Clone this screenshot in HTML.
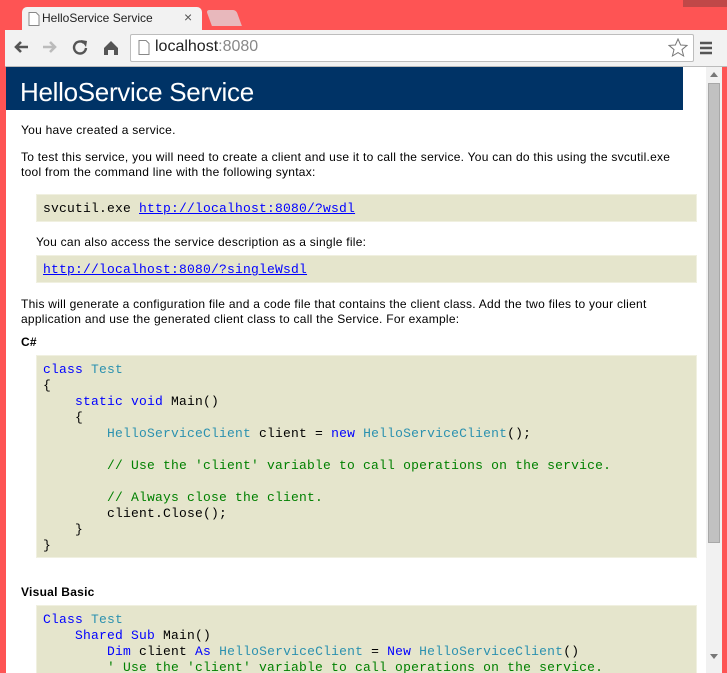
<!DOCTYPE html>
<html><head><meta charset="utf-8"><style>
*{margin:0;padding:0;box-sizing:border-box}
body{width:727px;height:673px;overflow:hidden;background:#fe5454;position:relative;font-family:"Liberation Sans",sans-serif}
.abs{position:absolute}
.tab{left:22px;top:7px;width:180px;height:27px;background:#f2f2f2;border-radius:5px 5px 0 0;font-size:12px;color:#222}
.tab2{left:209px;top:10px;width:30px;height:16px;background:#e8b8bc;transform:skewX(20deg);border-radius:3px 3px 0 0}
.toolbar{left:5px;top:30px;width:722px;height:37px;background:#f2f2f2;border-bottom:1px solid #bbb}
.url{left:130px;top:34px;width:564px;height:28px;background:#fff;border:1px solid #bdbdbd;border-radius:2px;font-size:16px;color:#222}
.page{left:6px;top:67px;width:700px;height:606px;background:#fff;overflow:hidden}
.sb{left:706px;top:67px;width:16px;height:606px;background:#f1f1f1}
.hdr{left:0;top:0;width:677px;height:43px;background:#003366;color:#fff;font-size:26px;padding:10px 0 0 14px;letter-spacing:-0.3px}
.t{font-size:12px;color:#000;line-height:15px;left:15px;width:674px;letter-spacing:0.26px}
.box{background:#e5e5cc;border:1px solid #f0f0e0;left:30px;width:661px;font-family:"Liberation Mono",monospace;font-size:13px;letter-spacing:0.2px}
pre{font-family:"Liberation Mono",monospace;font-size:13px;line-height:16px;color:#000;letter-spacing:0.2px}
a{color:#0000ff;text-decoration:underline}
.k{color:#0000ff}.c{color:#2b91af}.g{color:#008000}
</style></head><body>
<div class="abs tab"><svg class="abs" style="left:6px;top:5px" width="12" height="14"><path d="M1 .5h7l3 3v10H1z" fill="#fff" stroke="#888"/></svg><span class="abs" style="left:20px;top:4px">HelloService Service</span><span class="abs" style="left:162px;top:2px;font-size:14px;color:#555">×</span></div>
<div class="abs tab2"></div>
<div class="abs" style="left:683px;top:0;width:44px;height:7px;background:#c04848"></div>
<div class="abs toolbar"></div>
<svg class="abs" style="left:12px;top:38px" width="110" height="20">
<path d="M4 9h12M9 4L4 9l5 5" stroke="#555" stroke-width="2.6" fill="none"/>
<path d="M31 9h12M38 4l5 5-5 5" stroke="#bbb" stroke-width="2.6" fill="none"/>
<path d="M72 5a6 6 0 1 0 2 5" stroke="#555" stroke-width="2.4" fill="none"/><path d="M69 2l6 1-1 6z" fill="#555"/>
<path d="M92 10l7-7 7 7v7h-4v-5h-6v5h-4z" fill="#555"/>
</svg>
<div class="abs url"><svg class="abs" style="left:7px;top:5px" width="12" height="15"><path d="M1 .5h7l3 3v11H1z" fill="#fff" stroke="#888"/></svg><span class="abs" style="left:24px;top:3px">localhost<span style="color:#888">:8080</span></span>
<svg class="abs" style="left:537px;top:3px" width="20" height="20"><path d="M10 1l2.6 6 6.4.4-5 4.2 1.6 6.4L10 14.6 4.4 18 6 11.6 1 7.4l6.4-.4z" fill="none" stroke="#777"/></svg></div>
<svg class="abs" style="left:699px;top:41px" width="14" height="14"><path d="M1 2h12M1 7h12M1 12h12" stroke="#555" stroke-width="2.4"/></svg>
<div class="abs page">
<div class="abs hdr">HelloService Service</div>
<div class="abs t" style="top:56px">You have created a service.</div>
<div class="abs t" style="top:83px">To test this service, you will need to create a client and use it to call the service. You can do this using the svcutil.exe<br>tool from the command line with the following syntax:</div>
<div class="abs box" style="top:127px;height:28px;padding:6px 0 0 6px">svcutil.exe <a>http://localhost:8080/?wsdl</a></div>
<div class="abs t" style="top:168px;left:30px">You can also access the service description as a single file:</div>
<div class="abs box" style="top:188px;height:28px;padding:6px 0 0 6px"><a>http://localhost:8080/?singleWsdl</a></div>
<div class="abs t" style="top:230px">This will generate a configuration file and a code file that contains the client class. Add the two files to your client<br>application and use the generated client class to call the Service. For example:</div>
<div class="abs t" style="top:268px;font-weight:bold">C#</div>
<div class="abs box" style="top:288px;height:203px;padding:6px 0 0 6px"><pre><span class="k">class</span> <span class="c">Test</span>
{
    <span class="k">static void</span> Main()
    {
        <span class="c">HelloServiceClient</span> client = <span class="k">new</span> <span class="c">HelloServiceClient</span>();

        <span class="g">// Use the 'client' variable to call operations on the service.</span>

        <span class="g">// Always close the client.</span>
        client.Close();
    }
}</pre></div>
<div class="abs t" style="top:518px;font-weight:bold">Visual Basic</div>
<div class="abs box" style="top:538px;height:80px;padding:6px 0 0 6px"><pre><span class="k">Class</span> <span class="c">Test</span>
    <span class="k">Shared Sub</span> Main()
        <span class="k">Dim</span> client <span class="k">As</span> <span class="c">HelloServiceClient</span> = <span class="k">New</span> <span class="c">HelloServiceClient</span>()
        <span class="g">' Use the 'client' variable to call operations on the service.</span></pre></div>
</div>
<div class="abs sb"><div class="abs" style="left:2px;top:16px;width:12px;height:460px;background:#c1c1c1;border:1px solid #a8a8a8"></div>
<svg class="abs" style="left:4px;top:5px" width="8" height="5"><path d="M0 5L4 0 8 5z" fill="#777"/></svg>
<svg class="abs" style="left:4px;top:587px" width="8" height="5"><path d="M0 0L4 5 8 0z" fill="#777"/></svg></div>
</body></html>
